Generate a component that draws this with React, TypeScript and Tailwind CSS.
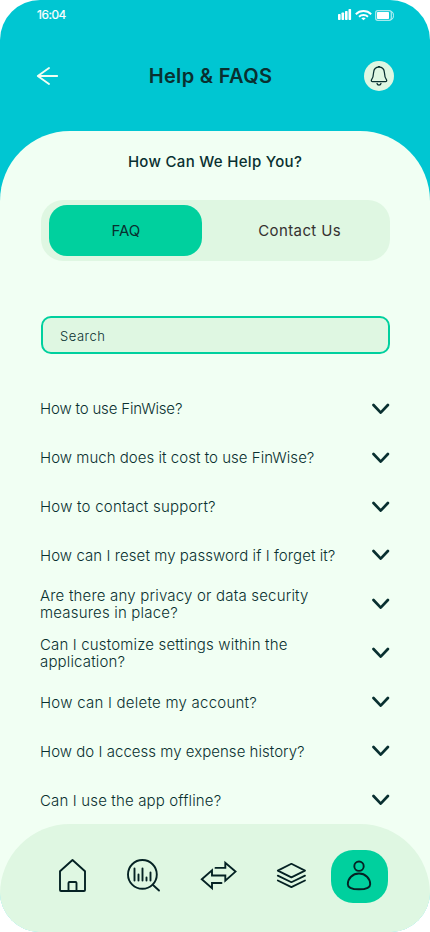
const questions = [
  { text: 'How to use FinWise?', spacing: 'tracking-[-0.17px]' },
  { text: 'How much does it cost to use FinWise?', spacing: 'tracking-[0.03px]' },
  { text: 'How to contact support?', spacing: 'tracking-[0.22px]' },
  { text: 'How can I reset my password if I forget it?', spacing: 'tracking-[0.07px]' },
  { text: 'Are there any privacy or data security measures in place?', spacing: 'tracking-[0.19px]' },
  { text: 'Can I customize settings within the application?', spacing: 'tracking-[0.16px]' },
  { text: 'How can I delete my account?', spacing: 'tracking-[0.24px]' },
  { text: 'How do I access my expense history?', spacing: 'tracking-[0.03px]' },
  { text: 'Can I use the app offline?', spacing: 'tracking-[0.15px]' },
];

function StatusIcons() {
  return (
    <svg width="57" height="12" viewBox="338 9 57 12" fill="none">
      <g fill="#fff">
        <rect x="338" y="14" width="2.6" height="6" rx=".7" />
        <rect x="341.5" y="12.5" width="2.6" height="7.5" rx=".7" />
        <rect x="345" y="11" width="2.6" height="9" rx=".7" />
        <rect x="348.5" y="9" width="2.6" height="11" rx=".7" />
      </g>
      <path d="M355.800 14.200a11 11 0 0 1 15.400 0M359 16.800a6.700 6.700 0 0 1 9 0" stroke="#fff" strokeWidth="1.9" />
      <path d="M361.300 18.200q2.200-1.600 4.400 0l-2.200 2.100z" fill="#fff" />
      <rect x="375.700" y="10.700" width="15.600" height="9.600" rx="2" stroke="#fff" strokeOpacity=".65" strokeWidth="1.3" />
      <rect x="377" y="12" width="12" height="7" rx=".8" fill="#fff" />
      <path d="M391.500 11.500q2 .4 2 4t-2 4" stroke="#fff" strokeOpacity=".75" strokeWidth="1" />
    </svg>
  );
}

function Header() {
  return (
    <header className="flex h-[131px] flex-col text-white">
      <div className="flex h-[30px] items-center justify-between pl-[37px] pr-[35px]">
        <span className="text-[12px] tracking-[-0.45px] [-webkit-text-stroke:0.2px_white]">16:04</span>
        <StatusIcons />
      </div>
      <div className="mt-[31px] flex h-[30px] items-center px-9">
        <svg width="30" height="20" viewBox="36 66 30 20" fill="none" stroke="#f1fff3" strokeWidth="1.9" strokeLinecap="round" strokeLinejoin="round">
          <path d="M57.200 76H37.800M49 68l-11.200 8L49 84" />
        </svg>
        <h1 className="flex-1 pr-[9px] text-center text-[20px] font-semibold tracking-[0.33px] text-[#093030]">Help &amp; FAQS</h1>
        <div className="flex size-[30px] items-center justify-center rounded-full bg-[#dff7e2]">
          <svg width="30" height="30" viewBox="364 61 30 30" fill="none" stroke="#093030" strokeWidth="1.25" strokeLinecap="round" strokeLinejoin="round">
            <path d="M379 67.100c-3.300 0-5.200 2.300-5.400 5.400-.2 3.700-.5 5.200-2 7.200-.7 1-.2 2 .9 2h13c1.100 0 1.600-1 .9-2-1.500-2-1.800-3.500-2-7.200-.2-3.100-2.100-5.400-5.400-5.400zM378.200 66.600h1.600M377 83.500c.5 2 3.500 2 4 0" />
          </svg>
        </div>
      </div>
    </header>
  );
}

function Chevron() {
  return (
    <svg className="shrink-0" width="18" height="12" viewBox="0 0 18 12" fill="none" stroke="#093030" strokeWidth="2.7" strokeLinecap="round" strokeLinejoin="round">
      <path d="M1.500 2 8.700 9.600 15.900 2" />
    </svg>
  );
}

function BottomNav() {
  return (
    <nav className="absolute inset-x-0 bottom-0 flex h-[108px] items-start rounded-t-[70px] bg-[#dff7e2] pl-[56px] pt-[26px]">
      <svg width="275" height="53" viewBox="56 850 275 53" fill="none" stroke="#052224" strokeWidth="1.9" strokeLinecap="round" strokeLinejoin="round">
        <path d="M60 871.200 72.500 860 85 871.200V890q0 1-1 1H61q-1 0-1-1zM68.500 891v-8q0-1 1-1h6q1 0 1 1v8" />
        <circle cx="142.400" cy="874.400" r="14.400" />
        <path d="m153 885 6 5.500M134.500 868.500v12M138.500 874.500v6M142.500 868.500v12M146.500 877.500v3M150.500 872.500v8" />
        <path d="M221.500 883H212v5.200L201.800 879.200 212 870.400v5.100h13.300v5.100l10.200-9-10.200-8.800v5.100h-9.800" strokeLinejoin="miter" />
        <path d="m277.800 870.600 13.600-6.800 13.600 6.800-13.600 6.800zM277.800 875.600l13.600 6.600 13.600-6.600M277.800 880.500l13.600 6.600 13.600-6.600" strokeWidth="1.8" />
      </svg>
      <div className="h-[53px] w-[57px] rounded-[22px] bg-[#00d09e]">
        <svg width="57" height="53" viewBox="331 850 57 53" fill="none" stroke="#052224" strokeWidth="1.9">
          <circle cx="359" cy="866.200" r="4.700" />
          <path d="M359 873.500c-6.500 0-11.200 5-11.200 10.700 0 3.800 4.800 5.100 11.200 5.100s11.200-1.300 11.200-5.100c0-5.700-4.700-10.700-11.200-10.700z" />
        </svg>
      </div>
    </nav>
  );
}

export default function App() {
  return (
    <div className="h-[932px] w-[430px] bg-white font-['Inter','Liberation_Sans',sans-serif]">
      <div className="relative h-full overflow-hidden rounded-[40px] bg-[#00c6d2]">
        <Header />
        <main className="h-[801px] rounded-t-[70px] bg-[#f1fff3] px-10 text-[#093030]">
          <h2 className="pt-[19px] text-center text-[15px] font-medium leading-6 tracking-[0.3px]">How Can We Help You?</h2>
          <div className="ml-px mt-[26px] flex h-[61px] items-center rounded-[22px] bg-[#dff7e2] pl-[8.4px]">
            <button className="h-[51px] w-[153px] rounded-[18px] bg-[#00d09e] pt-0.5 text-[15px]">FAQ</button>
            <button className="flex-1 pl-[7px] pt-0.5 text-[15px] tracking-[0.4px] text-[#363130]">Contact Us</button>
          </div>
          <div className="ml-px mt-[55px] flex h-[38px] items-center rounded-[10px] border-2 border-[#00d09e] bg-[#dff7e2] pl-[17px] pt-[3px]">
            <span className="text-[13px] font-light tracking-[0.5px]">Search</span>
          </div>
          <ul className="mt-[30.3px]">
            {questions.map((q) => (
              <li key={q.text} className="flex h-[48.92px] items-center justify-between">
                <span className={`w-[300px] text-[15px] font-light leading-[17px] ${q.spacing}`}>{q.text}</span>
                <Chevron />
              </li>
            ))}
          </ul>
        </main>
        <BottomNav />
      </div>
    </div>
  );
}
